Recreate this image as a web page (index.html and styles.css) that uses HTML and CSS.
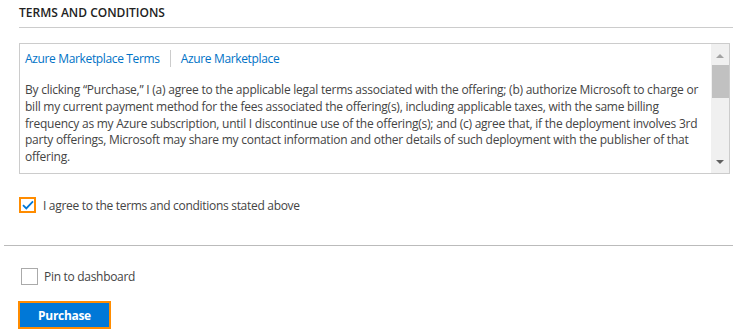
FILE: index.html
```html
<!DOCTYPE html>
<html lang="en">
<head>
    <meta charset="UTF-8">
    <meta name="viewport" content="width=device-width, initial-scale=1.0">
    <title>Terms and conditions</title>
    <link rel="stylesheet" href="styles.css">
</head>
<body>

<div class="terms">
    <h2 class="title">TERMS AND CONDITIONS</h2>

    <div class="box">
        <div class="box-content">
            <div class="links">
                <a href="#">Azure Marketplace Terms</a>
                <span class="sep"></span>
                <a href="#">Azure Marketplace</a>
            </div>
            <p class="legal">By clicking “Purchase,” I (a) agree to the applicable legal terms associated with the offering; (b) authorize Microsoft to charge or bill my current payment method for the fees associated the offering(s), including applicable taxes, with the same billing frequency as my Azure subscription, until I discontinue use of the offering(s); and (c) agree that, if the deployment involves 3rd party offerings, Microsoft may share my contact information and other details of such deployment with the publisher of that offering.</p>
        </div>
        <div class="scrollbar">
            <span class="arrow up"></span>
            <span class="thumb"></span>
            <span class="arrow down"></span>
        </div>
    </div>

    <label class="check-row agree">
        <span class="checkbox focused">
            <svg width="12" height="10" viewBox="0 0 12 10"><path d="M1 5.2 L4.3 8.4 L11 1.4" fill="none" stroke="#0078d7" stroke-width="1.8"/></svg>
        </span>
        I agree to the terms and conditions stated above
    </label>
</div>

<div class="footer">
    <label class="check-row pin">
        <span class="checkbox"></span>
        Pin to dashboard
    </label>
    <button type="button" class="purchase">Purchase</button>
</div>

</body>
</html>
```

FILE: styles.css
```css
body {
    margin: 0;
    font-family: "Open Sans", "Noto Sans", sans-serif;
    font-size: 12px;
    color: #444;
    letter-spacing: -0.3px;
}
.terms {
    padding: 5px 0 0 19px;
}
.title {
    margin: 0;
    font-size: 12px;
    font-weight: 600;
    color: #222;
    letter-spacing: 0;
    line-height: 16px;
    padding-bottom: 6px;
    border-bottom: 1px solid #ccc;
}
.box {
    display: flex;
    height: 129px;
    margin: 15px 3px 0 0;
    border: 1px solid #ccc;
    overflow: hidden;
}
.box-content {
    flex: 1;
    padding: 6px 6px 0 5px;
}
.links {
    display: flex;
    align-items: center;
    line-height: 16px;
    letter-spacing: -0.35px;
}
.links a {
    color: #0072c6;
    text-decoration: none;
}
.sep {
    width: 1px;
    height: 17px;
    background: #ccc;
    margin: 0 10px;
}
.legal {
    margin: 15px 0 0;
    line-height: 16.75px;
    letter-spacing: -0.24px;
}
.scrollbar {
    width: 18px;
    background: #f0f0f0;
    display: flex;
    flex-direction: column;
    align-items: center;
}
.arrow {
    width: 0;
    height: 0;
    border-left: 4px solid transparent;
    border-right: 4px solid transparent;
}
.arrow.up {
    margin-top: 10px;
    border-bottom: 4px solid #a3a3a3;
}
.arrow.down {
    margin-top: auto;
    margin-bottom: 9px;
    border-top: 4px solid #606060;
}
.thumb {
    width: 17px;
    height: 33px;
    margin-top: 7px;
    background: #c1c1c1;
}
.check-row {
    display: flex;
    align-items: center;
    gap: 7px;
}
.checkbox {
    width: 15px;
    height: 15px;
    border: 1px solid #aaa;
    display: flex;
    align-items: center;
    justify-content: center;
    box-sizing: content-box;
}
.checkbox.focused {
    border: 2px solid #ff8c00;
    width: 13px;
    height: 12px;
}
.agree {
    margin-top: 23px;
    height: 16px;
    padding-bottom: 32px;
}
.footer {
    margin-left: 4px;
    border-top: 1px solid #bbb;
    padding: 22px 0 0 17px;
}
.pin {
    gap: 6px;
}
.purchase {
    margin-top: 16px;
    margin-left: -3px;
    width: 93px;
    height: 28px;
    background: #0078d7;
    border: 2px solid #ff8c00;
    color: #fff;
    font-family: "Open Sans", "Noto Sans", sans-serif;
    font-weight: 700;
    font-size: 12px;
    letter-spacing: -0.3px;
    cursor: pointer;
}
```
